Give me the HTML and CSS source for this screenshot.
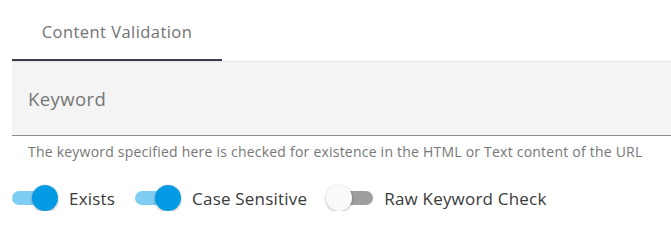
FILE: index.html
```html
<!DOCTYPE html>
<html lang="en">
<head>
    <meta charset="UTF-8">
    <meta name="viewport" content="width=device-width, initial-scale=1.0">
    <title>Content Validation</title>
    <link rel="stylesheet" href="styles.css">
</head>
<body>
    <div class="panel">
        <div class="tab-bar">
            <div class="tab active">Content Validation</div>
        </div>
        <div class="field">
            <input type="text" class="field-input" placeholder="Keyword">
        </div>
        <p class="helper">The keyword specified here is checked for existence in the HTML or Text content of the URL</p>
        <div class="switches">
            <label class="switch-item">
                <span class="switch on"><span class="track"></span><span class="thumb"></span></span>
                <span class="switch-label">Exists</span>
            </label>
            <label class="switch-item">
                <span class="switch on"><span class="track"></span><span class="thumb"></span></span>
                <span class="switch-label">Case Sensitive</span>
            </label>
            <label class="switch-item">
                <span class="switch"><span class="track"></span><span class="thumb"></span></span>
                <span class="switch-label">Raw Keyword Check</span>
            </label>
        </div>
    </div>
</body>
</html>
```

FILE: styles.css
```css
body, html {
    margin: 0;
    padding: 0;
    background: #fff;
    font-family: "Open Sans", Lato, sans-serif;
}
.panel {
    padding-left: 12px;
}
.tab-bar {
    display: flex;
    height: 61px;
    border-bottom: 1px solid #e6e6e6;
}
.tab {
    width: 210px;
    display: flex;
    align-items: center;
    justify-content: center;
    font-size: 16.5px;
    letter-spacing: 0.45px;
    color: #727272;
    box-sizing: border-box;
    padding-top: 4px;
}
.tab.active {
    border-bottom: 2px solid #3b3f4d;
}
.field {
    background: #f4f4f4;
    border-bottom: 1px solid #8c8c8c;
    height: 73px;
}
.field-input {
    width: 100%;
    height: 100%;
    box-sizing: border-box;
    border: 0;
    background: transparent;
    padding: 0 16px;
    font-family: inherit;
    font-size: 18.5px;
    letter-spacing: 0.4px;
    color: #333;
    outline: none;
}
.field-input::placeholder { color: #777; }
.helper {
    margin: 0;
    padding: 6px 0 0 16px;
    font-size: 14px;
    letter-spacing: 0.22px;
    line-height: 20px;
    color: #777;
}
.switches {
    display: flex;
    align-items: center;
    margin-top: 23px;
    margin-left: -7px;
}
.switch-item {
    display: flex;
    align-items: center;
    margin-right: 13px;
}
.switch {
    position: relative;
    width: 54px;
    height: 26px;
}
.track {
    position: absolute;
    left: 13px;
    top: 6px;
    width: 40px;
    height: 14px;
    border-radius: 7px;
    background: #9e9e9e;
}
.thumb {
    position: absolute;
    left: 6px;
    top: 0;
    width: 26px;
    height: 26px;
    border-radius: 50%;
    background: #fafafa;
    box-shadow: 0 1px 3px rgba(0, 0, 0, 0.3);
}
.switch.on .track {
    left: 7px;
    background: #7fcdf3;
}
.switch.on .thumb {
    left: 27px;
    background: #049be4;
}
.switch-label {
    margin-left: 10px;
    font-size: 17px;
    letter-spacing: 0.2px;
    color: #3a3a3a;
}
```
